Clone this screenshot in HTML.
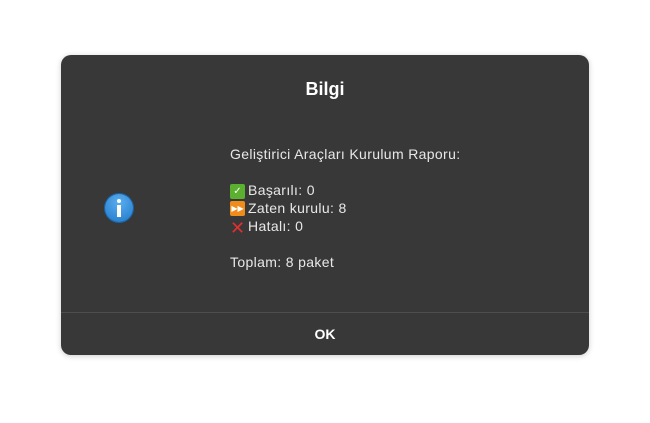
<!DOCTYPE html>
<html><head><meta charset="utf-8"><style>
body{margin:0;width:650px;height:423px;background:#fff;position:relative;font-family:"Liberation Sans","DejaVu Sans",sans-serif;overflow:hidden}
.d{position:absolute;left:61px;top:55px;width:528px;height:300px;background:#383838;border-radius:10px;box-shadow:0 1px 6px rgba(0,0,0,.2)}
.t{position:absolute;top:24px;left:0;right:0;text-align:center;color:#fff;font-weight:bold;font-size:18px}
.m{position:absolute;left:169px;top:90px;color:#e8e8e8;font-size:14px;letter-spacing:0.35px;white-space:nowrap}
.m div{height:18px;line-height:18px;position:relative}
.ic{position:absolute;left:0;top:2px;width:15px;height:15px;border-radius:2px;color:#fff;font-size:10px;text-align:center;line-height:15px;font-weight:bold;letter-spacing:0}
.p{padding-left:18px}
.sep{position:absolute;left:0;right:0;top:257px;border-top:1px solid #4e4e4e}
.ok{position:absolute;left:0;right:0;top:271px;text-align:center;color:#fff;font-weight:bold;font-size:14px}
.info{position:absolute;left:44px;top:139px;width:28px;height:28px;border-radius:50%;background:radial-gradient(circle at 50% 30%,#5aaef0,#1f78c8);box-shadow:0 0 0 1px #1a64a8}
</style></head><body>
<div class="d">
<div class="t">Bilgi</div>
<div class="info"><div style="position:absolute;left:12px;top:5px;width:4px;height:4px;background:#fff;border-radius:50%"></div><div style="position:absolute;left:12px;top:11px;width:4px;height:12px;background:#fff"></div></div>
<div class="m">
<div>Geliştirici Araçları Kurulum Raporu:</div>
<div></div>
<div class="p"><span class="ic" style="background:#5cb030;top:3px">✓</span>Başarılı: 0</div>
<div class="p"><span class="ic" style="background:#f08c1c;font-size:8px;top:2px">▶▶</span>Zaten kurulu: 8</div>
<div class="p"><span class="ic" style="color:#e03030;font-size:18px;background:none;top:3px;line-height:16px">✕</span>Hatalı: 0</div>
<div></div>
<div>Toplam: 8 paket</div>
</div>
<div class="sep"></div>
<div class="ok">OK</div>
</div>
</body></html>
